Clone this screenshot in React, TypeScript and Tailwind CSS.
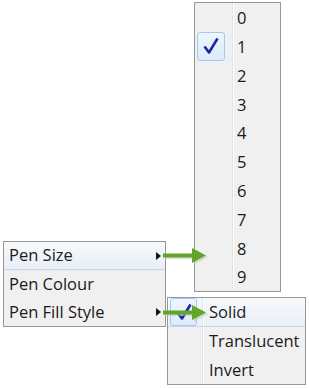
import React from "react";

const font = { fontFamily: '"Open Sans", "Noto Sans", sans-serif' };

const Check = () => (
  <svg width="16" height="18" viewBox="0 0 16 18" className="block">
    <path d="M1.5 9.5 L6 15.5 L14.5 1.5" fill="none" stroke="#1c2b9c" strokeWidth="2.6" strokeLinejoin="round" />
  </svg>
);

const CheckBox = ({ className }: { className: string }) => (
  <div className={`flex items-center justify-center rounded-[3px] border border-[#a8c8ee] bg-gradient-to-b from-[#eef5fd] to-[#dceafb] ${className}`}>
    <Check />
  </div>
);

const SubArrow = () => (
  <svg width="5" height="8" viewBox="0 0 5 8" className="block">
    <path d="M0 0 L5 4 L0 8 Z" fill="#111" />
  </svg>
);

const GreenArrow = ({ top }: { top: number }) => (
  <svg width="48" height="18" viewBox="0 0 48 18" className="absolute left-[162px]" style={{ top }}>
    <path d="M2 7 H31 V1.5 L45 9 L31 16.5 V11 H2 Z" fill="#b8c7ae" opacity="0.5" transform="translate(1,1)" />
    <path d="M1 6.5 H30 V1 L44 8.5 L30 16 V10.5 H1 Z" fill="#63a52b" />
  </svg>
);

export default function App() {
  const sizes = ["0", "1", "2", "3", "4", "5", "6", "7", "8", "9"];
  return (
    <div className="relative h-[388px] w-[309px] overflow-hidden bg-white text-[16.5px] text-[#1b1b1b]" style={font}>
      {/* pen size submenu */}
      <div className="absolute left-[194px] top-[2px] flex h-[290px] w-[87px] flex-col border border-[#979797] bg-[#f0f0f0]">
        {sizes.map((s) => (
          <div key={s} className="flex h-[28.8px] items-center">
            <div className="flex h-full w-[37px] items-center pl-[2px]">
              {s === "1" ? <CheckBox className="h-[29px] w-[28px]" /> : null}
            </div>
            <div className="h-full w-[2px] border-l border-[#e2e3e3] bg-white" />
            <span className="pt-[2px] pl-[3px] leading-none">{s}</span>
          </div>
        ))}
      </div>

      {/* main menu */}
      <div className="absolute left-[3px] top-[241px] flex h-[86px] w-[163px] flex-col border border-[#979797] bg-[#f0f0f0]">
        <div className="flex h-[28px] items-center justify-between border-b border-[#c2d8f2] bg-gradient-to-b from-[#f7f9fc] to-[#e9eff7] pl-[5px] pr-[4px]">
          <span className="leading-none">Pen Size</span>
          <SubArrow />
        </div>
        <div className="flex h-[28px] items-center pl-[5px]">
          <span className="leading-none">Pen Colour</span>
        </div>
        <div className="flex h-[28px] items-center justify-between pl-[5px] pr-[4px]">
          <span className="leading-none">Pen Fill Style</span>
          <SubArrow />
        </div>
      </div>

      {/* fill style submenu */}
      <div className="absolute left-[167px] top-[297px] flex h-[88px] w-[139px] flex-col border border-[#979797] bg-[#f0f0f0]">
        <div className="flex h-[29px] items-center border-b border-[#c2d8f2] bg-gradient-to-b from-[#f7f9fc] to-[#e9eff7]">
          <div className="flex h-full w-[34px] items-center pl-[2px]">
            <CheckBox className="h-[28px] w-[27px]" />
          </div>
          <div className="h-full w-[2px] border-l border-[#e2e3e3] bg-white" />
          <span className="pl-[5px] leading-none">Solid</span>
        </div>
        {["Translucent", "Invert"].map((t) => (
          <div key={t} className="flex h-[29px] items-center">
            <div className="h-full w-[34px]" />
            <div className="h-full w-[2px] border-l border-[#e2e3e3] bg-white" />
            <span className="pl-[5px] leading-none">{t}</span>
          </div>
        ))}
      </div>

      <GreenArrow top={247} />
      <GreenArrow top={304} />
    </div>
  );
}
